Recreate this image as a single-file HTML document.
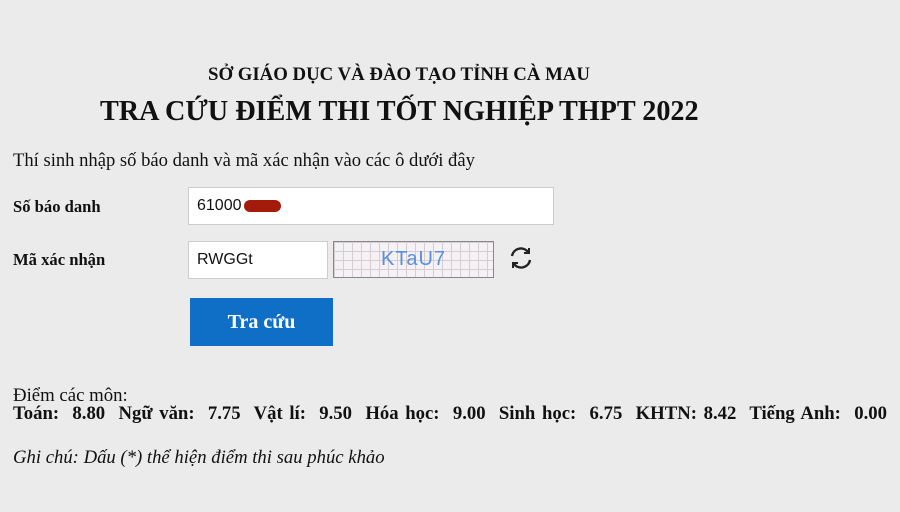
<!DOCTYPE html>
<html><head><meta charset="utf-8"><style>
body{margin:0;width:900px;height:512px;background:#ebebeb;position:relative;overflow:hidden;font-family:"Liberation Serif",serif;color:#111}
.a{position:absolute;white-space:nowrap;transform-origin:0 50%}
.inp{position:absolute;background:#fff;border:1px solid #ccc;box-sizing:border-box;font-family:"Liberation Sans",sans-serif;font-size:16px;padding-left:8px;display:flex;align-items:center}
</style></head><body>
<div class="a" style="left:208px;top:64px;font-size:18.8px;font-weight:bold">SỞ GIÁO DỤC VÀ ĐÀO TẠO TỈNH CÀ MAU</div>
<div class="a" style="left:100px;top:96px;font-size:28.2px;font-weight:bold">TRA CỨU ĐIỂM THI TỐT NGHIỆP THPT 2022</div>
<div class="a" style="left:13px;top:150px;font-size:18.6px">Thí sinh nhập số báo danh và mã xác nhận vào các ô dưới đây</div>
<div class="a" style="left:13px;top:197px;font-size:16.6px;font-weight:bold">Số báo danh</div>
<div class="a" style="left:13px;top:250px;font-size:16.6px;font-weight:bold">Mã xác nhận</div>
<div class="inp" style="left:188px;top:187px;width:366px;height:38px">61000<span style="display:inline-block;width:37px;height:12px;border-radius:6px;background:#a31b0a;margin-left:2px"></span></div>
<div class="inp" style="left:188px;top:241px;width:140px;height:38px">RWGGt</div>
<div style="position:absolute;left:333px;top:241px;width:161px;height:37px;box-sizing:border-box;border:1px solid #888;background-color:#f4f2f4;background-image:linear-gradient(#d8ccd0 1px,transparent 1px),linear-gradient(90deg,#d8ccd0 1px,transparent 1px);background-size:9px 9px;display:flex;align-items:center;justify-content:center;font-family:'Liberation Sans',sans-serif;font-size:20px;color:#5a8ee0;letter-spacing:1px">KTaU7</div>
<svg style="position:absolute;left:508px;top:245px" width="26" height="26" viewBox="0 0 26 26" fill="none" stroke="#222" stroke-width="2.4"><path d="M4 11a9 9 0 0 1 16-4"/><path d="M22 15a9 9 0 0 1-16 4"/><path d="M21 3v5h-5" stroke-width="2"/><path d="M5 23v-5h5" stroke-width="2"/></svg>
<div style="position:absolute;left:190px;top:298px;width:143px;height:48px;background:#0f6fc6;color:#fff;font-weight:bold;font-size:20px;display:flex;align-items:center;justify-content:center">Tra cứu</div>
<div class="a" style="left:13px;top:385px;font-size:18.8px">Điểm các môn:</div>
<div class="a" style="left:13px;top:403px;font-size:19px;font-weight:bold;transform:scaleX(.985);word-spacing:2px">Toán:&nbsp; 8.80&nbsp; Ngữ văn:&nbsp; 7.75&nbsp; Vật lí:&nbsp; 9.50&nbsp; Hóa học:&nbsp; 9.00&nbsp; Sinh học:&nbsp; 6.75&nbsp; KHTN: 8.42&nbsp; Tiếng Anh:&nbsp; 0.00</div>
<div class="a" style="left:13px;top:447px;font-size:18.7px;font-style:italic">Ghi chú: Dấu (*) thể hiện điểm thi sau phúc khảo</div>
</body></html>
